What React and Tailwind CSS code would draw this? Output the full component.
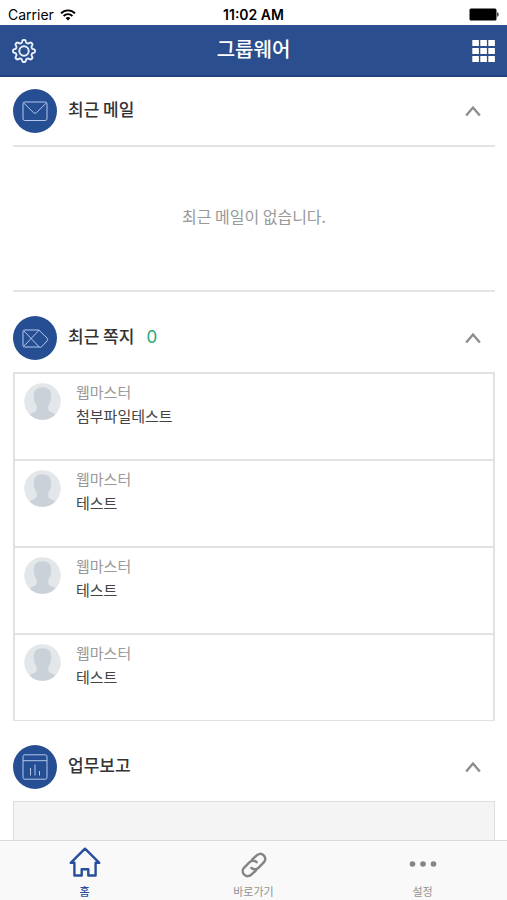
import { useState } from "react";

const messages = [
  { id: 1, sender: "웹마스터", text: "첨부파일테스트" },
  { id: 2, sender: "웹마스터", text: "테스트" },
  { id: 3, sender: "웹마스터", text: "테스트" },
  { id: 4, sender: "웹마스터", text: "테스트" },
];

// outline of a gear with eight rounded teeth
const gearPoints = Array.from({ length: 120 }, (_, i) => {
  const a = (i / 120) * Math.PI * 2;
  const r = 9.7 + 1.4 * Math.tanh(1.8 * Math.cos(8 * a));
  return `${(12 + r * Math.sin(a)).toFixed(2)},${(12 - r * Math.cos(a)).toFixed(2)}`;
}).join(" ");

function StatusBar() {
  return (
    <div className="grid grid-cols-3 items-center h-[25px] px-2 bg-white text-black font-['Inter',sans-serif] text-[14px] leading-5 shrink-0">
      <div className="flex items-center gap-1.5 pt-1">
        <span>Carrier</span>
        <svg width="16" height="12" viewBox="0 0 16 12" fill="none" stroke="black" strokeWidth="1.8">
          <path d="M1 4.3a10 10 0 0 1 14 0" />
          <path d="M3.6 7a6.3 6.3 0 0 1 8.8 0" />
          <path d="M8 11.6 5.6 9.1a3.4 3.4 0 0 1 4.8 0Z" fill="black" stroke="none" />
        </svg>
      </div>
      <div className="text-center font-semibold pt-1 whitespace-nowrap">11:02 AM</div>
      <div className="flex justify-end pt-1">
        <svg width="30" height="13" viewBox="0 0 30 13">
          <rect x="0.5" y="0.5" width="27" height="12" rx="1.5" />
          <path d="M28.3 4.2c1.7.5 1.7 4.1 0 4.6Z" />
        </svg>
      </div>
    </div>
  );
}

function Header() {
  return (
    <header className="grid grid-cols-[1fr_auto_1fr] items-center h-[52px] px-3 bg-[#2b4f8e] border-b-2 border-[#234180] text-white shrink-0">
      <button aria-label="설정 열기" className="justify-self-start pt-0.5">
        <svg width="24" height="24" viewBox="0 0 24 24" fill="none" stroke="#e9f0fc" strokeWidth="1.9" strokeLinejoin="round">
          <polygon points={gearPoints} />
          <circle cx="12" cy="12" r="4.7" />
        </svg>
      </button>
      <h1 className="text-xl leading-6 font-medium pb-0.5">그룹웨어</h1>
      <button aria-label="전체 메뉴" className="justify-self-end pt-0.5">
        <svg width="23" height="22" viewBox="0 0 23 22" fill="currentColor">
          {[0, 8, 16].map((y) =>
            [0, 8, 16].map((x) => <rect key={`${x}-${y}`} x={x + 0.3} y={y} width="6.6" height="6" />)
          )}
        </svg>
      </button>
    </header>
  );
}

function MailIcon() {
  return (
    <svg width="26" height="26" viewBox="0 0 26 26" fill="none" stroke="#b3c8ec" strokeWidth="1">
      <rect x="1" y="4" width="24" height="18.5" rx="1.8" />
      <path d="m1.5 4.8 10.2 10q1.3 1 2.6 0l10.2-10" />
    </svg>
  );
}

function NoteIcon() {
  return (
    <svg width="28" height="26" viewBox="0 0 28 26" fill="none" stroke="#b3c8ec" strokeWidth="1" strokeLinejoin="round">
      <path d="M18 5H3.5Q2 5 2 6.5v14Q2 22 3.5 22H18" />
      <path d="M2.5 5.5 18 21.8M2.5 21.5 18 5.2" />
      <path d="m18 5.2 8 7.8q1.4 1.5 0 3l-5.7 6q-1.1 1-2.3-.2" />
    </svg>
  );
}

function ReportIcon() {
  return (
    <svg width="26" height="26" viewBox="0 0 26 26" fill="none" stroke="#b3c8ec" strokeWidth="1">
      <rect x="1" y="0.8" width="24" height="24.4" rx="1.8" />
      <path d="M1 6.7h24M8.5 14v7.5M13 10.5v11M17.5 17v4.5" />
    </svg>
  );
}

function Avatar() {
  return (
    <svg width="37" height="37" viewBox="0 0 37 37" className="mt-[3px] shrink-0">
      <clipPath id="avatar">
        <circle cx="18.5" cy="18.5" r="18.3" />
      </clipPath>
      <g clipPath="url(#avatar)">
        <rect width="37" height="37" fill="#e3e7ea" />
        <path
          d="M18.5 4.3c-5.6 0-8.6 2.9-8.6 7.6 0 1.4-.2 2.5 0 3.7.2 1.7.6 3.4 1.5 4.8.8 1.3 1.4 2.5 1.4 4.3 0 2.5-.8 3.6-3.1 4.6C7 30.4 5.5 31.5 4.5 33v4h28v-4c-1-1.5-2.5-2.6-5.2-3.7-2.3-1-3.1-2.1-3.1-4.6 0-1.8.6-3 1.4-4.3.9-1.4 1.3-3.1 1.5-4.8.2-1.2 0-2.3 0-3.7 0-4.7-3-7.6-8.6-7.6Z"
          fill="#cbd1d9"
        />
      </g>
    </svg>
  );
}

function Section({ icon, title, count, className = "", children }) {
  const [open, setOpen] = useState(true);

  return (
    <section className={className}>
      <div className="flex items-center pb-3">
        <div className="flex items-center justify-center size-11 rounded-full bg-[#264e93] shrink-0">{icon}</div>
        <h2 className="ml-[11px] pb-1 text-[17px] leading-6 font-medium text-[#333]">{title}</h2>
        {count !== undefined && (
          <span className="ml-3 pb-0.5 text-[17px] leading-6 text-[#20ac76] font-['Inter',sans-serif]">{count}</span>
        )}
        <button
          aria-label={`${title} 접기`}
          aria-expanded={open}
          onClick={() => setOpen(!open)}
          className={`ml-auto p-3.5 -my-3 ${open ? "" : "rotate-180"}`}
        >
          <svg width="16" height="12" viewBox="0 0 16 12" fill="none" stroke="#8d8d8d" strokeWidth="2.4">
            <path d="m1.2 10.5 6.8-8 6.8 8" />
          </svg>
        </button>
      </div>
      {open && children}
    </section>
  );
}

function TabBar() {
  return (
    <nav className="grid grid-cols-3 h-[60px] pb-px bg-[#f9f9f9] border-t border-[#d9d9d9] text-[11px] leading-4 text-[#929292] shrink-0">
      <a href="#home" className="flex flex-col items-center justify-between pt-1.5 text-[#264e9c]">
        <svg width="32" height="30" viewBox="0 0 32 30" fill="none" stroke="currentColor" strokeWidth="2.4" strokeLinejoin="round">
          <path d="M16 1.7 1.7 15.8h3.7v12.7h7.3v-6.2h6.6v6.2h7.3V15.8h3.7Z" />
        </svg>
        <span className="font-medium">홈</span>
      </a>
      <a href="#links" className="flex flex-col items-center justify-between pt-[11px]">
        <svg width="28" height="26" viewBox="0 0 28 26" fill="none" stroke="#858585" strokeWidth="2.5" strokeLinecap="round">
          <path d="m12.2 7.4 4.2-3.8a4.9 4.9 0 0 1 7.6 6.6l-5.6 5.6a4.9 4.9 0 0 1-7 0" />
          <path d="m15.8 18.600-4.200 3.800A4.900 4.900 0 0 1 4 15.800l5.600-5.600a4.900 4.900 0 0 1 7 0" />
        </svg>
        <span>바로가기</span>
      </a>
      <a href="#settings" className="flex flex-col items-center justify-between pt-5">
        <svg width="28" height="6" viewBox="0 0 28 6" fill="#858585">
          <circle cx="3.5" cy="3" r="2.8" />
          <circle cx="14" cy="3" r="2.8" />
          <circle cx="24.5" cy="3" r="2.8" />
        </svg>
        <span>설정</span>
      </a>
    </nav>
  );
}

function App() {
  return (
    <div className="flex flex-col h-screen bg-white font-['Noto_Sans_CJK_KR',sans-serif]">
      <StatusBar />
      <Header />
      <main className="flex-1 min-h-0 overflow-hidden pl-[13px] pr-3 pt-3">
        <Section icon={<MailIcon />} title="최근 메일">
          <p className="pt-14 pb-[61px] border-y-2 border-[#e4e4e4] text-center text-base leading-[26px] text-[#999]">
            최근 메일이 없습니다.
          </p>
        </Section>

        <Section icon={<NoteIcon />} title="최근 쪽지" count={0} className="mt-6">
          <ul className="border-2 border-b border-[#e2e2e2] divide-y-2 divide-[#e2e2e2]">
            {messages.map((msg) => (
              <li key={msg.id} className="flex gap-[15px] px-[9px] pt-1.5 pb-[31px]">
                <Avatar />
                <div className="text-[15px] leading-6">
                  <p className="text-[#999]">{msg.sender}</p>
                  <p className="text-[#444]">{msg.text}</p>
                </div>
              </li>
            ))}
          </ul>
        </Section>

        <Section icon={<ReportIcon />} title="업무보고" className="mt-6">
          <div className="h-24 bg-[#f4f4f4] border border-[#dedede]" />
        </Section>
      </main>
      <TabBar />
    </div>
  );
}

export default App;
